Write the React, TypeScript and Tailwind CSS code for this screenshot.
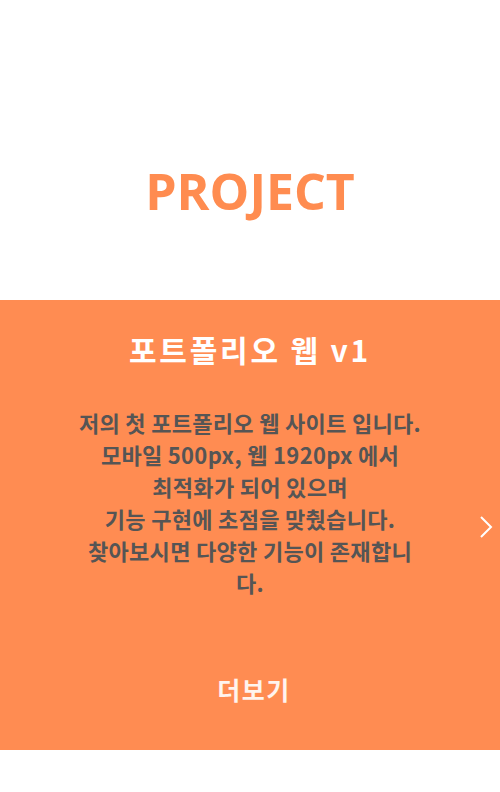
export default function App() {
  const lines = [
    "저의 첫 포트폴리오 웹 사이트 입니다.",
    "모바일 500px, 웹 1920px 에서",
    "최적화가 되어 있으며",
    "기능 구현에 초점을 맞췄습니다.",
    "찾아보시면 다양한 기능이 존재합니",
    "다.",
  ];

  return (
    <div className="w-[500px] h-[792px] bg-white font-['Open_Sans','Noto_Sans_CJK_KR',sans-serif]">
      {/* 상단 타이틀 */}
      <section className="h-[300px] flex justify-center pt-[161px]">
        <h1 className="text-[50px] leading-[60px] font-bold text-[#ff8c50]">PROJECT</h1>
      </section>

      {/* 프로젝트 카드 */}
      <section className="relative h-[450px] bg-[#ff8c52] flex flex-col items-center">
        <h2 className="mt-[29px] text-[30px] leading-[40px] font-bold text-white tracking-[2.8px] font-['Noto_Sans_CJK_KR',sans-serif]">
          포트폴리오 웹 v1
        </h2>
        <p className="mt-[37px] w-[380px] text-center text-[22px] leading-[32px] font-bold tracking-[0.3px] text-[#555555] font-['Noto_Sans_CJK_KR',sans-serif]">
          {lines.map((l, i) => (
            <span key={i}>
              {l}
              {i < lines.length - 1 && <br />}
            </span>
          ))}
        </p>
        <button className="mt-auto mb-[45px] ml-[8px] text-[25px] leading-[32px] font-bold tracking-[1.5px] text-white/90 font-['Noto_Sans_CJK_KR',sans-serif]">
          더보기
        </button>

        {/* 다음 버튼 */}
        <svg
          className="absolute right-[6px] top-[214px]"
          width="16"
          height="26"
          viewBox="0 0 16 26"
          fill="none"
          stroke="white"
          strokeWidth="2"
        >
          <polyline points="3,3 13,13 3,23" />
        </svg>
      </section>
    </div>
  );
}
